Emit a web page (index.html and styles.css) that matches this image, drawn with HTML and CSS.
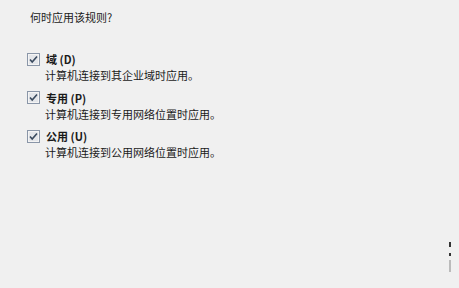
FILE: index.html
```html
<!DOCTYPE html>
<html lang="zh-CN">
<head>
<meta charset="utf-8">
<link rel="stylesheet" href="styles.css">
</head>
<body>
<div class="page">
  <div class="title">何时应用该规则?</div>
  <div class="options">
    <div class="opt">
      <div class="row">
        <svg class="cb" width="13" height="13" viewBox="0 0 13 13"><rect x="0.5" y="0.5" width="12" height="12" fill="#f4f4f4" stroke="#8a96a8"/><rect x="2" y="2" width="9" height="9" fill="#e4e6ea"/><path d="M3 6.5 L5.2 9 L10 3.5" fill="none" stroke="#3a4a5e" stroke-width="1.6"/></svg>
        <span class="label">域 (D)</span>
      </div>
      <div class="desc">计算机连接到其企业域时应用。</div>
    </div>
    <div class="opt">
      <div class="row">
        <svg class="cb" width="13" height="13" viewBox="0 0 13 13"><rect x="0.5" y="0.5" width="12" height="12" fill="#f4f4f4" stroke="#8a96a8"/><rect x="2" y="2" width="9" height="9" fill="#e4e6ea"/><path d="M3 6.5 L5.2 9 L10 3.5" fill="none" stroke="#3a4a5e" stroke-width="1.6"/></svg>
        <span class="label">专用 (P)</span>
      </div>
      <div class="desc">计算机连接到专用网络位置时应用。</div>
    </div>
    <div class="opt">
      <div class="row">
        <svg class="cb" width="13" height="13" viewBox="0 0 13 13"><rect x="0.5" y="0.5" width="12" height="12" fill="#f4f4f4" stroke="#8a96a8"/><rect x="2" y="2" width="9" height="9" fill="#e4e6ea"/><path d="M3 6.5 L5.2 9 L10 3.5" fill="none" stroke="#3a4a5e" stroke-width="1.6"/></svg>
        <span class="label">公用 (U)</span>
      </div>
      <div class="desc">计算机连接到公用网络位置时应用。</div>
    </div>
  </div>
  <div class="marks"><i class="m1"></i><i class="m2"></i><i class="m3"></i></div>
</div>
</body>
</html>
```
FILE: styles.css
```css
html, body { margin: 0; padding: 0; }
body {
  background: #f0f0f0;
  width: 459px;
  height: 288px;
  overflow: hidden;
  font-family: "Noto Sans CJK SC", "Liberation Sans", sans-serif;
  font-size: 11px;
  color: #1a1a1a;
}
.page { position: relative; width: 459px; height: 288px; padding: 9px 0 0 30px; box-sizing: border-box; }
.title { line-height: 16px; }
.options { margin-top: 26px; display: flex; flex-direction: column; gap: 6.5px; }
.row { display: flex; align-items: center; gap: 6px; height: 16px; margin-left: -3px; }
.cb { flex: none; }
.label { font-weight: bold; }
.desc { margin-left: 15px; line-height: 16px; }
.marks { position: absolute; left: 449px; top: 242px; width: 2px; }
.marks i { display: block; width: 2px; background: #333; }
.m1 { height: 5px; }
.m2 { height: 3px; margin-top: 6px; }
.m3 { height: 12px; margin-top: 4px; background: #bbb !important; }
```
